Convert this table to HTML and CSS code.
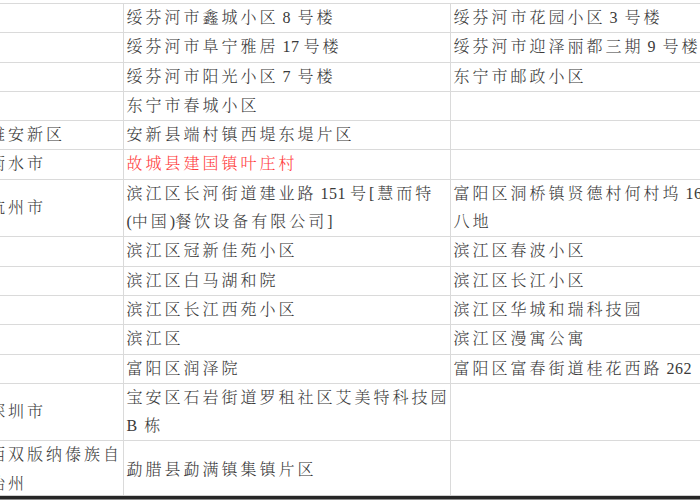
FILE: index.html
```html
<!DOCTYPE html>
<html lang="zh-CN">
<head>
<meta charset="utf-8">
<title>地址表</title>
<link rel="stylesheet" href="styles.css">
</head>
<body>
<div class="sheet">
  <table class="grid">
    <colgroup>
      <col class="c1"><col class="c2"><col class="c3">
    </colgroup>
    <tbody>
      <tr><td></td><td>绥芬河市鑫城小区 8 号楼</td><td>绥芬河市花园小区 3 号楼</td></tr>
      <tr><td></td><td>绥芬河市阜宁雅居 <span class="n">17</span> 号楼</td><td>绥芬河市迎泽丽都三期 9 号楼</td></tr>
      <tr><td></td><td>绥芬河市阳光小区 7 号楼</td><td>东宁市邮政小区</td></tr>
      <tr><td></td><td>东宁市春城小区</td><td></td></tr>
      <tr><td>雄安新区</td><td>安新县端村镇西堤东堤片区</td><td></td></tr>
      <tr><td>衡水市</td><td class="red">故城县建国镇叶庄村</td><td></td></tr>
      <tr><td>杭州市</td><td>滨江区长河街道建业路 <span class="n">151</span> 号[慧而特<br><span class="p">(</span>中国<span class="p">)</span>餐饮设备有限公司]</td><td>富阳区洞桥镇贤德村何村坞 <span class="n">168</span><br>八地</td></tr>
      <tr><td></td><td>滨江区冠新佳苑小区</td><td>滨江区春波小区</td></tr>
      <tr><td></td><td>滨江区白马湖和院</td><td>滨江区长江小区</td></tr>
      <tr><td></td><td>滨江区长江西苑小区</td><td>滨江区华城和瑞科技园</td></tr>
      <tr><td></td><td>滨江区</td><td>滨江区漫寓公寓</td></tr>
      <tr><td></td><td>富阳区润泽院</td><td>富阳区富春街道桂花西路 <span class="n">262</span></td></tr>
      <tr><td>深圳市</td><td>宝安区石岩街道罗租社区艾美特科技园<br>B 栋</td><td></td></tr>
      <tr><td>西双版纳傣族自<br>治州</td><td>勐腊县勐满镇集镇片区</td><td></td></tr>
    </tbody>
  </table>
</div>
<div class="frame"></div>
</body>
</html>
```
FILE: styles.css
```css
html, body {
  margin: 0;
  padding: 0;
  width: 700px;
  height: 500px;
  overflow: hidden;
  background: #ffffff;
}

body {
  display: flex;
  flex-direction: column;
}

.sheet {
  height: 495px;
  overflow: hidden;
  flex: none;
}

.grid {
  border-collapse: collapse;
  table-layout: fixed;
  width: 864px;
  margin-top: 3px;
  margin-left: -14px;
  font-family: "Liberation Serif", "Noto Serif CJK SC", "Noto Sans CJK SC", serif;
  font-size: 16px;
  font-weight: 300;
  color: #3a3a3a;
  letter-spacing: 3px;
  word-spacing: -3px;
}

.c1 { width: 137px; }
.c2 { width: 327px; }
.c3 { width: 400px; }

.grid td {
  border: 1px solid #dadada;
  padding: 0 3px;
  line-height: 28.3px;
  white-space: nowrap;
  overflow: hidden;
  vertical-align: middle;
}

.grid td:first-child {
  border-left: none;
}

.grid .red {
  color: #ff3c3c;
}

.n {
  letter-spacing: 0.5px;
}

.p {
  letter-spacing: 0;
}

.frame {
  flex: 1;
  border-top: 1px solid #cfcfcf;
  background: #8a8a8a;
  box-shadow: inset 0 3px 0 #262626;
}
```
